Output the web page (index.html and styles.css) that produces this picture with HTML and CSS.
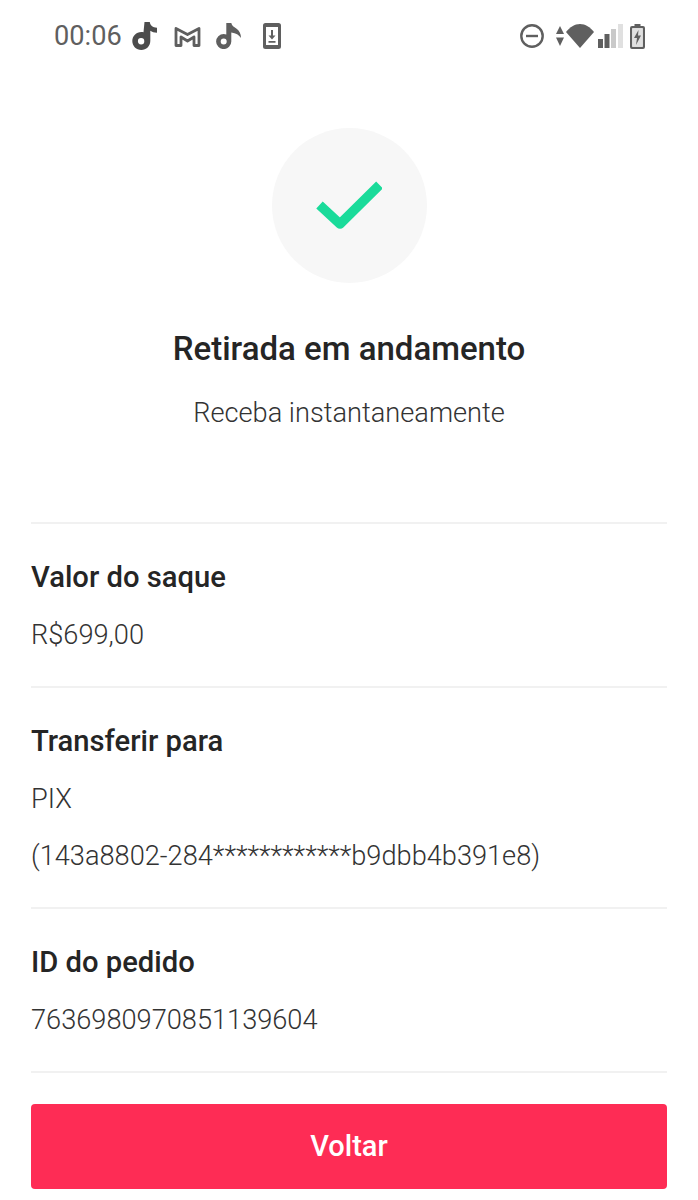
FILE: index.html
```html
<!DOCTYPE html>
<html lang="pt-BR">

<head>
    <meta charset="UTF-8">
    <meta name="viewport" content="width=device-width, initial-scale=1.0">
    <title>Retirada em andamento</title>
    <link rel="stylesheet" href="styles.css">
</head>

<body>
    <header class="status-bar">
        <div class="status-left">
            <span class="clock">00:06</span>
            <svg class="icon icon-tiktok" viewBox="0 0 26 28"><path fill-rule="evenodd" d="M12.500 0h5.300c.4 3.200 2.800 5.400 7.200 5.800v5c-2.700 0-5-.7-6.700-2V19c0 5-4 9-9 9s-9-4-9-9 4-9 9-9c.8 0 1.500 .1 2.200 .3zM9 16a3.200 3.200 0 1 0 3.300 3.200A3.200 3.200 0 0 0 9 16z"/></svg>
            <svg class="icon icon-mail" viewBox="0 0 27 21"><path d="M2 2.500 13.500 8.500 25 2.500V19.500H20V11L13.500 15 7 11V19.500H2z" fill="none" stroke="#5f5f5f" stroke-width="2.800" stroke-linejoin="round"/></svg>
            <svg class="icon icon-note" viewBox="0 0 25 26"><path fill-rule="evenodd" d="M10.300 0h5c.5 2.500 2.500 4 5 5.500 3 2 4.700 5.500 4.700 9.500-2-3-5-5-9.700-5.500v9a7.600 7.600 0 1 1-7.600-7.600c.9 0 1.800 .2 2.600 .5zM7.700 15.400a3 3 0 1 0 3 3 3 3 0 0 0-3-3z"/></svg>
            <svg class="icon icon-phone" viewBox="0 0 18 26"><path fill-rule="evenodd" d="M2.500 0h13A2.500 2.500 0 0 1 18 2.500v21a2.500 2.500 0 0 1-2.500 2.500h-13A2.500 2.500 0 0 1 0 23.500v-21A2.500 2.500 0 0 1 2.500 0zM3 4v18h12V4z"/><path d="M8 7h2v5.500h2.500L9 16.500 5.500 12.500H8zM5.500 18h7v1.800h-7z"/></svg>
        </div>
        <div class="status-right">
            <svg class="icon icon-dnd" viewBox="0 0 24 24"><circle cx="12" cy="12" r="10.700" fill="none" stroke="#5f5f5f" stroke-width="2.400"/><rect x="6" y="10.800" width="12" height="2.400"/></svg>
            <svg class="icon icon-updown" viewBox="0 0 8 20"><path d="M4 0l4 8H0zM4 20l-4-8.500h8z"/></svg>
            <svg class="icon icon-wifi" viewBox="0 0 28 24"><path d="M0 8C4 3 8.500 0 14 0s10 3 14 8L14 24z"/></svg>
            <svg class="icon icon-signal" viewBox="0 0 25 24"><rect x="0" y="15" width="5" height="9"/><rect x="6.500" y="10" width="5" height="14"/><rect class="dim" x="13" y="5" width="5" height="19"/><rect class="dimmer" x="20" y="0" width="5" height="24"/></svg>
            <svg class="icon icon-battery" viewBox="0 0 15 25"><path fill-rule="evenodd" d="M4.500 0h6v2h2.500A2 2 0 0 1 15 4v19a2 2 0 0 1-2 2H2a2 2 0 0 1-2-2V4a2 2 0 0 1 2-2h2.500zM2.300 4.300v18.400h10.400V4.300z"/><path class="dimmer" d="M2.300 4.300h10.400v18.400H2.300z"/><path d="M8.500 6 4 14h3L6 21l5-9.500H8z"/></svg>
        </div>
    </header>

    <main class="page">
        <section class="hero">
            <div class="check-circle">
                <svg class="check" viewBox="0 0 66 50"><path d="M3.500 24 24 43 63.500 4" fill="none" stroke="#1adb9a" stroke-width="9.500" stroke-linejoin="round"/></svg>
            </div>
            <h1 class="hero-title">Retirada em andamento</h1>
            <p class="hero-sub">Receba instantaneamente</p>
        </section>

        <section class="info-row">
            <h2 class="info-label">Valor do saque</h2>
            <p class="info-value">R$699,00</p>
        </section>
        <section class="info-row">
            <h2 class="info-label">Transferir para</h2>
            <p class="info-value">PIX</p>
            <p class="info-value">(143a8802-284************b9dbb4b391e8)</p>
        </section>
        <section class="info-row">
            <h2 class="info-label">ID do pedido</h2>
            <p class="info-value">7636980970851139604</p>
        </section>

        <button class="back-btn">Voltar</button>
    </main>
</body>

</html>
```

FILE: styles.css
```css
* {
    box-sizing: border-box;
}

body {
    margin: 0;
    background-color: white;
    color: #252525;
    font-family: Roboto, "Liberation Sans", sans-serif;
}

.status-bar {
    height: 72px;
    display: flex;
    justify-content: space-between;
    align-items: center;
    padding: 0 53px 0 54px;
}

.status-left,
.status-right {
    display: flex;
    align-items: center;
}

.clock {
    font-size: 27.200px;
    color: #5f5f5f;
}

.icon {
    display: block;
    flex: none;
    fill: #5f5f5f;
}

.icon-tiktok {
    width: 26px;
    height: 28px;
    margin-left: 10px;
    fill: #4c4c4c;
}

.icon-mail {
    width: 27px;
    height: 21px;
    margin-left: 16px;
}

.icon-note {
    width: 25px;
    height: 26px;
    margin-left: 15px;
}

.icon-phone {
    width: 18px;
    height: 26px;
    margin-left: 22px;
}

.icon-dnd {
    width: 24px;
    height: 24px;
}

.icon-updown {
    width: 8px;
    height: 20px;
    margin-left: 12px;
}

.icon-wifi {
    width: 28px;
    height: 24px;
    margin-left: 2px;
}

.icon-signal {
    width: 25px;
    height: 24px;
    margin-left: 4px;
}

.icon .dim {
    fill: #c9c9c9;
}

.icon .dimmer {
    fill: #e0e0e0;
}

.icon-battery {
    width: 15px;
    height: 25px;
    margin-left: 7px;
}

.page {
    padding: 0 31px;
}

.hero {
    display: flex;
    flex-direction: column;
    align-items: center;
    padding: 56px 0 90px;
}

.check-circle {
    width: 155px;
    height: 155px;
    border-radius: 50%;
    background-color: #f7f7f7;
    display: flex;
    justify-content: center;
    align-items: center;
}

.check {
    width: 66px;
    height: 50px;
}

.hero-title {
    margin: 44px 0 0;
    font-size: 33px;
    line-height: 44px;
    font-weight: 500;
}

.hero-sub {
    margin: 23px 0 0;
    font-size: 27.200px;
    line-height: 38px;
    font-weight: 300;
    color: #333;
}

.info-row {
    border-top: 2px solid #f1f1f1;
    padding: 23px 0 22px;
}

.info-label {
    margin: 0;
    font-size: 29.200px;
    line-height: 60px;
    font-weight: 500;
}

.info-value {
    margin: 0;
    font-size: 27.200px;
    line-height: 57px;
    font-weight: 300;
    color: #333;
}

.back-btn {
    display: block;
    width: 100%;
    height: 85px;
    padding: 0 0 2px;
    border: none;
    border-radius: 4px;
    background-color: #fe2c55;
    color: white;
    font-family: inherit;
    font-size: 29px;
    font-weight: 500;
}

.info-row:last-of-type {
    border-bottom: 2px solid #f1f1f1;
    margin-bottom: 31px;
}
```
